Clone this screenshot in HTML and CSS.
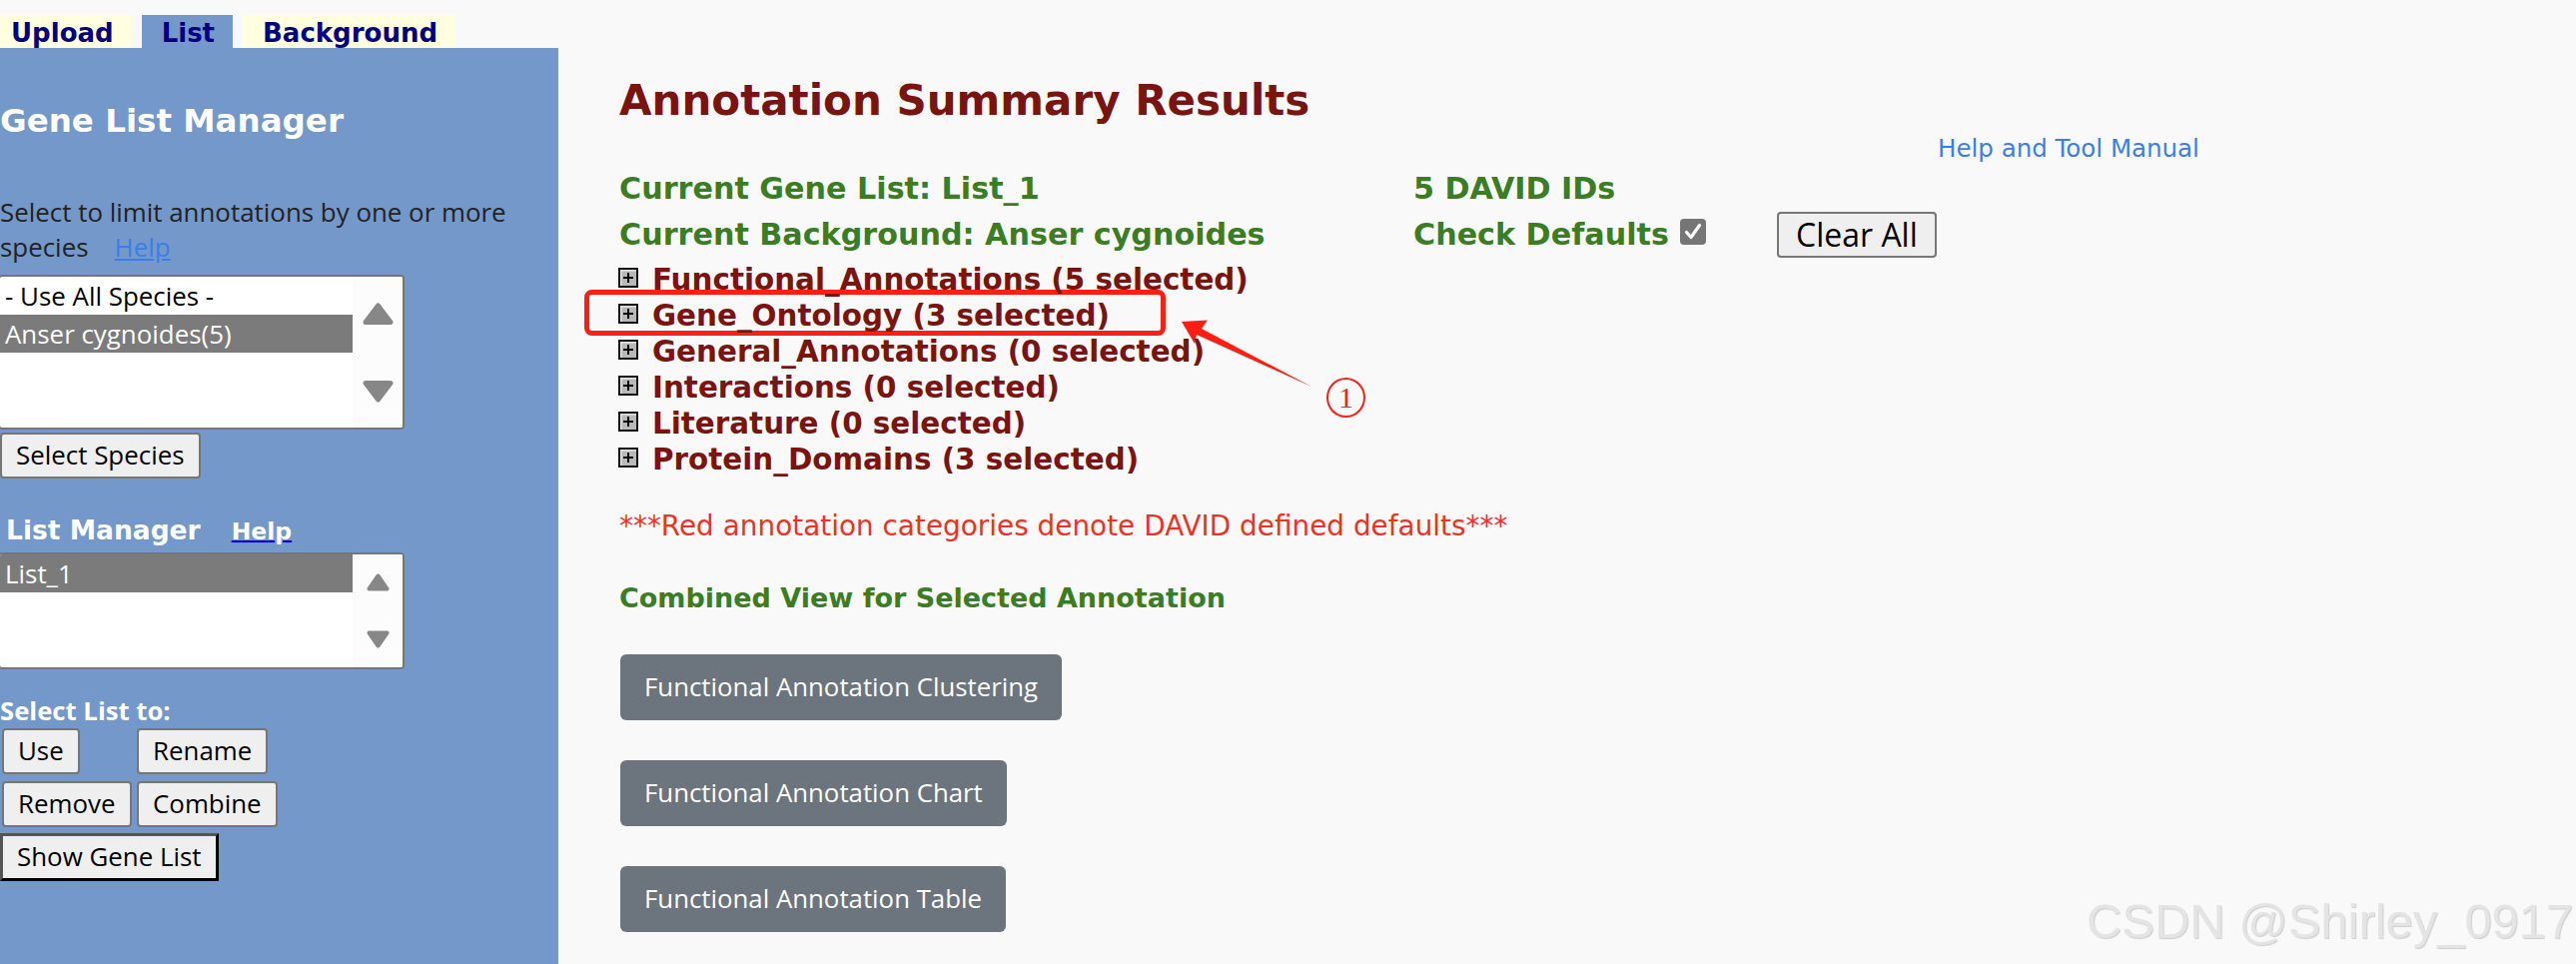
FILE: index.html
```html
<!DOCTYPE html>
<html>
<head>
<meta charset="utf-8">
<title>Annotation Summary Results</title>
<link rel="stylesheet" href="styles.css">
</head>
<body>
<div class="page">
  <svg class="markup" width="740" height="110" viewBox="0 0 740 110">
    <rect x="7.5" y="7.5" width="577" height="41" rx="5" fill="none" stroke="#fe1e14" stroke-width="5"/>
    <polygon points="603,37 629,35.5 623,44 733,102 618,50 616,59" fill="#fe1e14"/>
  </svg>
  <div class="leftcol">
    <div class="tabs">
      <div class="tab tab-off">Upload</div>
      <div class="tab tab-on">List</div>
      <div class="tab tab-off">Background</div>
    </div>
    <aside class="sidebar">
      <h2 class="side-title">Gene List Manager</h2>
      <div class="side-note">
        <div class="note-line">Select to limit annotations by one or more</div>
        <div class="note-line"><span>species</span><a class="help-link" href="#">Help</a></div>
      </div>
      <div class="listbox species">
        <div class="lb-options">
          <div class="lb-opt">- Use All Species -</div>
          <div class="lb-opt sel">Anser cygnoides(5)</div>
        </div>
        <div class="lb-scroll">
          <svg width="31" height="22" viewBox="0 0 31 22"><path d="M15.5 3 L28 19.5 H3 Z" fill="#878787" stroke="#878787" stroke-width="5" stroke-linejoin="round"/></svg>
          <svg width="31" height="22" viewBox="0 0 31 22"><path d="M15.5 19 L28 2.5 H3 Z" fill="#878787" stroke="#878787" stroke-width="5" stroke-linejoin="round"/></svg>
        </div>
      </div>
      <button class="sbtn btn-species">Select Species</button>
      <div class="lm-head"><span class="lm-title">List Manager</span><a class="lm-help" href="#">Help</a></div>
      <div class="listbox lists">
        <div class="lb-options">
          <div class="lb-opt sel">List_1</div>
        </div>
        <div class="lb-scroll">
          <svg width="23" height="18" viewBox="0 0 23 18"><path d="M11.5 2.5 L20.5 15.5 H2.5 Z" fill="#878787" stroke="#878787" stroke-width="4" stroke-linejoin="round"/></svg>
          <svg width="23" height="18" viewBox="0 0 23 18"><path d="M11.5 15.5 L20.5 2.5 H2.5 Z" fill="#878787" stroke="#878787" stroke-width="4" stroke-linejoin="round"/></svg>
        </div>
      </div>
      <div class="sel-to">Select List to:</div>
      <div class="btn-grid">
        <button class="sbtn">Use</button>
        <button class="sbtn">Rename</button>
        <button class="sbtn">Remove</button>
        <button class="sbtn">Combine</button>
      </div>
      <button class="sbtn show-btn">Show Gene List</button>
    </aside>
  </div>

  <main class="main">
    <h1 class="title">Annotation Summary Results</h1>
    <a class="tool-help" href="#">Help and Tool Manual</a>
    <div class="info">
      <div class="g">Current Gene List: List_1</div>
      <div class="g">5 DAVID IDs</div>
      <div></div>
      <div class="g">Current Background: Anser cygnoides</div>
      <div class="g check">Check Defaults<svg class="cb" width="26" height="26" viewBox="0 0 26 26"><rect x="0" y="0" width="26" height="26" rx="4" fill="#767676"/><path d="M6.5 13.5 L11 18.5 L19.5 6.5" fill="none" stroke="#fff" stroke-width="3.2" stroke-linecap="round" stroke-linejoin="round"/></svg></div>
      <div><button class="clear">Clear All</button></div>
    </div>
    <div class="cats">
      <div class="cat"><svg width="20" height="20" viewBox="0 0 20 20"><rect width="20" height="20" fill="#111"/><rect x="2" y="2" width="16" height="16" fill="#b8b8b8"/><path d="M2 2h16v1.5H3.5V18H2z" fill="#e4e4e4"/><path d="M10 5v10M5 10h10" stroke="#000" stroke-width="2"/></svg>Functional_Annotations (5 selected)</div>
      <div class="cat"><svg width="20" height="20" viewBox="0 0 20 20"><rect width="20" height="20" fill="#111"/><rect x="2" y="2" width="16" height="16" fill="#b8b8b8"/><path d="M2 2h16v1.5H3.5V18H2z" fill="#e4e4e4"/><path d="M10 5v10M5 10h10" stroke="#000" stroke-width="2"/></svg>Gene_Ontology (3 selected)</div>
      <div class="cat"><svg width="20" height="20" viewBox="0 0 20 20"><rect width="20" height="20" fill="#111"/><rect x="2" y="2" width="16" height="16" fill="#b8b8b8"/><path d="M2 2h16v1.5H3.5V18H2z" fill="#e4e4e4"/><path d="M10 5v10M5 10h10" stroke="#000" stroke-width="2"/></svg>General_Annotations (0 selected)</div>
      <div class="cat"><svg width="20" height="20" viewBox="0 0 20 20"><rect width="20" height="20" fill="#111"/><rect x="2" y="2" width="16" height="16" fill="#b8b8b8"/><path d="M2 2h16v1.5H3.5V18H2z" fill="#e4e4e4"/><path d="M10 5v10M5 10h10" stroke="#000" stroke-width="2"/></svg>Interactions (0 selected)</div>
      <div class="cat"><svg width="20" height="20" viewBox="0 0 20 20"><rect width="20" height="20" fill="#111"/><rect x="2" y="2" width="16" height="16" fill="#b8b8b8"/><path d="M2 2h16v1.5H3.5V18H2z" fill="#e4e4e4"/><path d="M10 5v10M5 10h10" stroke="#000" stroke-width="2"/></svg>Literature (0 selected)</div>
      <div class="cat"><svg width="20" height="20" viewBox="0 0 20 20"><rect width="20" height="20" fill="#111"/><rect x="2" y="2" width="16" height="16" fill="#b8b8b8"/><path d="M2 2h16v1.5H3.5V18H2z" fill="#e4e4e4"/><path d="M10 5v10M5 10h10" stroke="#000" stroke-width="2"/></svg>Protein_Domains (3 selected)</div>
    </div>
    <div class="note">***Red annotation categories denote DAVID defined defaults***</div>
    <div class="combined">Combined View for Selected Annotation</div>
    <div class="fa-list">
      <button class="fa-btn">Functional Annotation Clustering</button>
      <button class="fa-btn">Functional Annotation Chart</button>
      <button class="fa-btn">Functional Annotation Table</button>
    </div>
  </main>

  <div class="circ">1</div>
  <div class="watermark">CSDN @Shirley_0917</div>
</div>
</body>
</html>
```

FILE: styles.css
```css
* { box-sizing: border-box; }
html, body { margin: 0; padding: 0; }
body { background: #f9f9f9; font-family: "DejaVu Sans", Verdana, sans-serif; }

.page {
  position: relative;
  width: 2579px;
  height: 965px;
  overflow: hidden;
  display: flex;
  background: #f9f9f9;
}

/* ---------- left column ---------- */
.leftcol {
  width: 559px;
  flex: none;
  display: flex;
  flex-direction: column;
}
.tabs {
  display: flex;
  gap: 10px;
  height: 48px;
  padding-top: 15px;
  margin-left: -9px;
}
.tab {
  height: 33px;
  padding: 3px 18px 0 20px;
  font: 700 26px/30px "DejaVu Sans", Verdana, sans-serif;
  color: #000080;
  white-space: nowrap;
}
.tab-off { background: #ffffe0; }
.tab-on { background: #7398c9; }

.sidebar {
  flex: 1;
  background: #7398c9;
  display: flex;
  flex-direction: column;
  align-items: flex-start;
}
.side-title {
  margin: 53px 0 0 0;
  font: 700 32.5px/40px "DejaVu Sans", Verdana, sans-serif;
  color: #fff;
  white-space: nowrap;
}
.side-note {
  margin: 54px 0 0 0;
  font: 400 25.9px/35px "Open Sans", sans-serif;
  color: #222;
}
.note-line { height: 35px; white-space: nowrap; }
.help-link {
  margin-left: 26px;
  color: #3c7ee8;
  text-decoration: underline;
}

.listbox {
  display: flex;
  margin-left: -2px;
  width: 407px;
  border: 2px solid #767676;
  border-radius: 4px;
  background: #fff;
  overflow: hidden;
}
.species { margin-top: 10px; height: 155px; }
.lists { margin-top: 5px; height: 117px; }
.lb-options { width: 353px; flex: none; }
.lb-opt {
  height: 38px;
  padding-left: 5px;
  font: 400 25.9px/38px "Open Sans", sans-serif;
  color: #000;
  white-space: nowrap;
}
.lb-opt.sel { background: #7b7b7b; color: #fff; }
.lb-scroll {
  flex: 1;
  background: #fcfcfc;
  display: flex;
  flex-direction: column;
  align-items: center;
  justify-content: space-between;
}
.species .lb-scroll { padding: 26px 0 25px; }
.lists .lb-scroll { padding: 19px 0 19px; }

.sbtn {
  height: 46px;
  padding: 0 14px;
  border: 2px solid #767676;
  border-radius: 4px;
  background: #efefef;
  font: 400 25.9px/1 "Open Sans", sans-serif;
  color: #000;
  white-space: nowrap;
}
.btn-species { margin-top: 3px; }

.lm-head {
  margin-top: 35px;
  padding-left: 6px;
  height: 34px;
  line-height: 34px;
  white-space: nowrap;
  font-family: "DejaVu Sans", Verdana, sans-serif;
}
.lm-title { font-size: 26.5px; font-weight: 700; color: #fff; }
.lm-help {
  margin-left: 31px;
  font-size: 23.5px;
  font-weight: 700;
  color: #fff;
  text-decoration: underline;
  text-decoration-color: #0000ee;
  text-decoration-thickness: 2px;
}

.sel-to {
  margin-top: 27px;
  font: 700 25.7px/30px "Open Sans", sans-serif;
  color: #fff;
}
.btn-grid {
  margin-top: 2px;
  display: grid;
  grid-template-columns: 135px auto;
  row-gap: 7px;
  justify-items: start;
}
.btn-grid .sbtn { margin-left: 2px; }
.show-btn {
  margin-top: 6px;
  height: 48px;
  border-width: 3px;
  border-color: #555 #000 #000 #555;
  border-radius: 0;
}

/* ---------- main ---------- */
.main {
  position: relative;
  z-index: 1;
  flex: 1;
  padding: 76px 0 0 61px;
  display: flex;
  flex-direction: column;
  align-items: flex-start;
}
.title {
  margin: 0;
  font: 700 42px/50px "DejaVu Sans", Verdana, sans-serif;
  color: #7a1410;
  white-space: nowrap;
}
.tool-help {
  margin-top: 8px;
  margin-left: 1320px;
  font: 400 24.5px/30px "DejaVu Sans", Verdana, sans-serif;
  color: #3c7ee8;
  text-decoration: none;
  white-space: nowrap;
}
.info {
  margin-top: 2px;
  display: grid;
  grid-template-columns: 795px 364px auto;
  grid-auto-rows: 46px;
  align-items: center;
}
.g {
  font: 700 30.2px/46px "DejaVu Sans", Verdana, sans-serif;
  color: #3a7d23;
  white-space: nowrap;
}
.check { display: flex; align-items: center; gap: 11px; }
.cb { margin-bottom: 7px; flex: none; }
.clear {
  display: block;
  height: 46px;
  padding: 0 17px;
  border: 2px solid #767676;
  border-radius: 4px;
  background: #efefef;
  font: 400 32px/1 "Open Sans", sans-serif;
  color: #000;
  white-space: nowrap;
}

.cats {
  margin-top: 4px;
  display: flex;
  flex-direction: column;
}
.cat {
  display: flex;
  align-items: center;
  height: 36px;
  font: 700 29.4px/36px "DejaVu Sans", Verdana, sans-serif;
  color: #7a1410;
  white-space: nowrap;
}
.cat svg { flex: none; margin: 0 14px 4px -1px; }

.note {
  margin-top: 32px;
  font: 400 27.9px/34px "DejaVu Sans", Verdana, sans-serif;
  color: #ee3124;
  white-space: nowrap;
}
.combined {
  margin-top: 38px;
  font: 700 27px/34px "DejaVu Sans", Verdana, sans-serif;
  color: #3a7d23;
  white-space: nowrap;
}
.fa-list {
  margin-top: 39px;
  display: flex;
  flex-direction: column;
  align-items: flex-start;
  gap: 40px;
}
.fa-btn {
  margin-left: 1px;
  height: 66px;
  padding: 0 24px;
  border: none;
  border-radius: 6px;
  background: #6c757d;
  color: #fff;
  font: 400 25.8px/1 "Open Sans", sans-serif;
  white-space: nowrap;
}

/* ---------- overlays (annotation markup, watermark) ---------- */
.markup {
  position: absolute;
  z-index: 0;
  left: 580px;
  top: 285px;
}
.circ {
  position: absolute;
  z-index: 2;
  left: 1328px;
  top: 378px;
  width: 39px;
  height: 40px;
  border: 2px solid #fe1e14;
  border-radius: 50%;
  display: flex;
  align-items: center;
  justify-content: center;
  font: 400 30px/1 "Liberation Serif", serif;
  color: #fe1e14;
}
.watermark {
  position: absolute;
  z-index: 2;
  left: 2089px;
  top: 895px;
  font: 400 48.9px/54px "Liberation Sans", Arial, sans-serif;
  color: #e4e4e4;
  text-shadow: 1px 1px 1px rgba(0, 0, 0, 0.18);
  white-space: nowrap;
}
```
